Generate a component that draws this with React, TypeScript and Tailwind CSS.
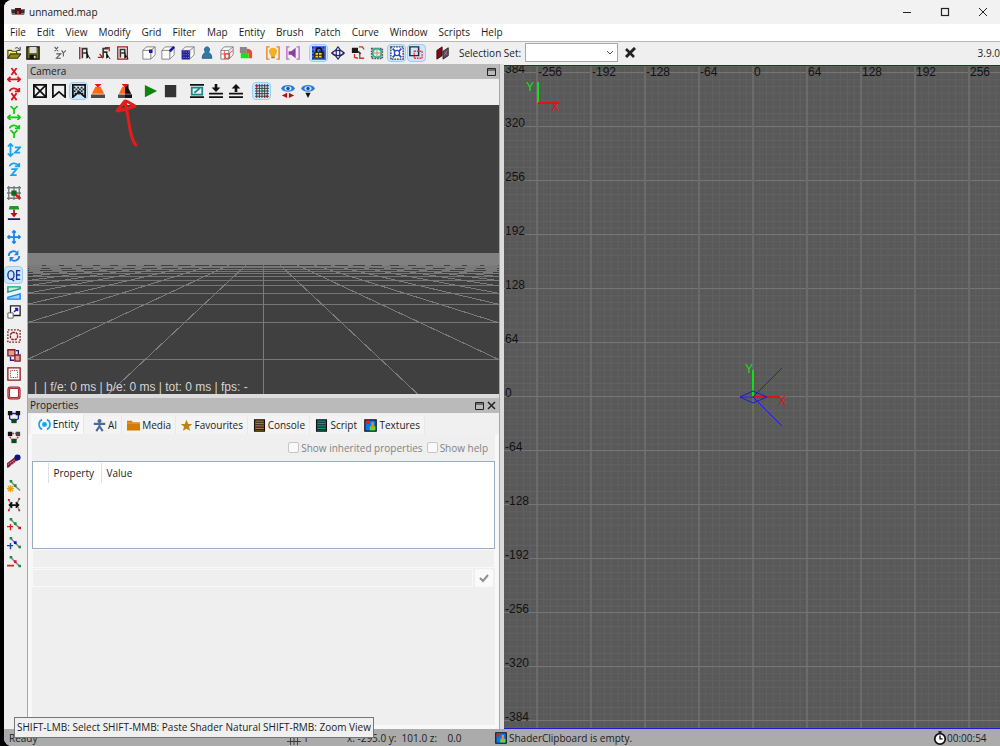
import React, { useState } from 'react';

interface IconProps {
    children: React.ReactNode;
    className?: string;
}

function Icon({ children, className = 'size-3.5' }: IconProps) {
    return (
        <svg viewBox="0 0 16 16" fill="none" className={`${className} shrink-0`} aria-hidden="true">
            {children}
        </svg>
    );
}

interface Tool {
    name: string;
    icon: React.ReactNode;
    active?: boolean;
}

function ToolButton({ name, icon, active }: Tool) {
    const [on, setOn] = useState(!!active);
    return (
        <button
            type="button"
            aria-label={name}
            onClick={() => active !== undefined && setOn(!on)}
            className={`flex h-[18px] w-[19px] shrink-0 items-center justify-center rounded-sm border ${
                on ? 'border-[#99cff5] bg-[#cce6fb]' : 'border-transparent'
            }`}
        >
            <Icon>{icon}</Icon>
        </button>
    );
}

function ToolGroup({ tools, className }: { tools: Tool[]; className: string }) {
    return (
        <div className={`flex shrink-0 items-center justify-between ${className}`}>
            {tools.map((t) => (
                <ToolButton key={t.name} {...t} />
            ))}
        </div>
    );
}

// shared shapes
const cube = <path d="M1 5h9v10H1zM1 5l4-4h10l-5 4M15 1v9l-5 5" stroke="#777" fill="#fff" />;
const flipArrow = <path d="M1 13h14M4 10l-3 3 3 3M12 10l3 3-3 3" stroke="currentColor" strokeWidth="2" />;
const spinArrow = <path d="M3 5c1-4 7-5 10-1M14 1v4H9" stroke="currentColor" strokeWidth="2" />;
const letterX = 'M5 0l6 8M11 0L5 8';
const letterY = 'M4 0l4 4 4-4M8 4v5';
const curve = <path d="M4 2l5 6 6 5" stroke="#888" strokeWidth="1.6" />;

const mainTools: { width: string; tools: Tool[] }[] = [
    {
        width: 'w-[38px]',
        tools: [
            {
                name: 'Open',
                icon: (
                    <>
                        <path d="M1 14V5h4l1 1h5v3" fill="#ffe97a" stroke="#4a4700" strokeWidth="1.3" />
                        <path d="M1 14l3-5h12l-4 5z" fill="#8b8b1a" stroke="#3c3a00" strokeWidth="1.3" />
                        <path d="M9 3c2-2 4-1 5 1M15 1v4h-4" stroke="#222" />
                    </>
                ),
            },
            {
                name: 'Save',
                icon: (
                    <>
                        <path d="M1 1h14v14H1z" fill="#6b6b1c" stroke="#111" strokeWidth="1.5" />
                        <path d="M4 1h8v7H4z" fill="#ddd" />
                        <path d="M4 10h8v5H4z" fill="#111" />
                        <path d="M9 11h2v3H9z" fill="#ddd" />
                    </>
                ),
            },
        ],
    },
    {
        width: 'w-[19px]',
        tools: [
            {
                name: 'Change views',
                icon: <path d="M3 1l4 5M7 1L3 6M5 9h5l-5 5h5M11 5l2 3 3-3M13 8v4" stroke="#555" strokeWidth="1.2" />,
            },
        ],
    },
    {
        width: 'w-[57px]',
        tools: [
            {
                name: 'Flip selection',
                icon: (
                    <>
                        <path d="M2 1v14" stroke="#a02020" strokeWidth="1.5" />
                        <path d="M5 14V3h5v5H6" stroke="#333" strokeWidth="1.800" />
                        <path d="M10 6v8l2-2 2 3" fill="#111" stroke="#111" />
                    </>
                ),
            },
            {
                name: 'Rotate selection',
                icon: (
                    <>
                        <path d="M7 13V3h6M7 7h5" stroke="#333" strokeWidth="1.800" />
                        <path d="M1 13h5M3 9l4 5M9 2h5v4" stroke="#b02020" strokeWidth="1.5" />
                        <path d="M11 7v7l2-2 2 3" fill="#111" stroke="#111" />
                    </>
                ),
            },
            {
                name: 'Scale selection',
                icon: (
                    <>
                        <path d="M2 1h11v14H2z" stroke="#a02020" strokeWidth="1.5" />
                        <path d="M5 13V4h5v4H6" stroke="#333" strokeWidth="1.800" />
                        <path d="M10 7v7l2-2 2 3" fill="#111" stroke="#111" />
                    </>
                ),
            },
        ],
    },
    {
        width: 'w-[117px]',
        tools: [
            { name: 'Select vertices', icon: <>{cube}<path d="M8 4h4v4H8z" fill="#1c1ca0" /></> },
            { name: 'Select edges', icon: <>{cube}<path d="M10 6l5-5" stroke="#1c1ca0" strokeWidth="3" /></> },
            {
                name: 'Select faces',
                icon: (
                    <>
                        {cube}
                        <path d="M1 5h9v10H1z" fill="#1c1c9c" />
                        <path d="M2 7h8M2 10h8M2 13h8" stroke="#aab" strokeDasharray="1 1" />
                    </>
                ),
            },
            {
                name: 'Clipper',
                icon: (
                    <path
                        d="M8 1c3 0 4 4 1.500 6 2 1 4 3 4 7H2.500c0-4 2-6 4-7C4 5 5 1 8 1z"
                        fill="#3379a8"
                        stroke="#1f577e"
                    />
                ),
            },
            {
                name: 'Hollow',
                icon: (
                    <>
                        {cube}
                        <path d="M1 9h9l5-4M5 5v10" stroke="#e44" />
                        <path d="M6 9h5v5H6z" stroke="#e22" />
                    </>
                ),
            },
            {
                name: 'Subtract',
                icon: (
                    <>
                        <path d="M1 1h8v7H1z" fill="#888" />
                        <path d="M9 3c4 0 6 2 6 5v6h-4V8H9z" fill="#f04a3a" />
                        <path d="M2 8h9v6H2z" fill="#1de01d" />
                    </>
                ),
            },
        ],
    },
    {
        width: 'w-[39px]',
        tools: [
            {
                name: 'Filter lights',
                icon: (
                    <>
                        <path d="M4 1H1v14h3M12 1h3v14h-3" stroke="#f08020" strokeWidth="1.6" />
                        <path d="M8 2c4 0 6 4 3.500 7L10 12H6L4.500 9C2 6 4 2 8 2z" fill="#f5b01c" />
                        <path d="M6 13h4" stroke="#b07818" strokeWidth="2" />
                    </>
                ),
            },
            {
                name: 'Filter sounds',
                icon: (
                    <>
                        <path d="M4 1H1v14h3M12 1h3v14h-3" stroke="#c468d4" strokeWidth="1.6" />
                        <path d="M3 6h3l5-4v12l-5-4H3z" fill="#8a3fa0" />
                    </>
                ),
            },
        ],
    },
    {
        width: 'w-[117px]',
        tools: [
            {
                name: 'Texture lock',
                active: true,
                icon: (
                    <>
                        <path d="M0 0h16v16H0z" fill="#4a6cf0" />
                        <path d="M0 2h16M0 6h16M0 10h16M0 14h16" stroke="#1c2a90" strokeDasharray="2 2" strokeWidth="1.500" />
                        <path d="M5 8V5c0-4 6-4 6 0v3" stroke="#111" strokeWidth="2" />
                        <path d="M2 7h12v7H2z" fill="#2d2a08" />
                        <path d="M4 9h8M4 12h8" stroke="#e7dc28" strokeDasharray="3 1" strokeWidth="2" />
                    </>
                ),
            },
            {
                name: 'Rotate free',
                icon: (
                    <>
                        <path d="M1 8c3-4 11-4 14 0-3 4-11 4-14 0z" stroke="#23236e" strokeWidth="1.600" />
                        <path d="M6 5v6M10 5v6" stroke="#23236e" strokeWidth="1.300" />
                        <path d="M8 1l3 4H5zM8 15l3-4H5z" fill="#fff" stroke="#23236e" strokeWidth="1.300" />
                    </>
                ),
            },
            {
                name: 'Swap models',
                icon: (
                    <>
                        <path d="M1 2h7v6H1z" fill="#1a1a1a" />
                        <path d="M9 1h4l2 3M4 9v4l4 1M10 9v5h5" stroke="#d03030" strokeWidth="1.500" />
                        <path d="M8 6l3 3" stroke="#333" strokeWidth="2" />
                    </>
                ),
            },
            {
                name: 'Patch thicken',
                icon: (
                    <>
                        <path d="M2 3h12v11H2z" stroke="#555" strokeDasharray="2 1" strokeWidth="2" />
                        <circle cx="8" cy="8" r="5" fill="#d9f4ef" stroke="#1cafa0" strokeWidth="2" />
                        <path d="M8 3v10M3 8h10" stroke="#e08020" />
                    </>
                ),
            },
            {
                name: 'Expand',
                active: true,
                icon: (
                    <>
                        <path d="M1 1h14v14H1z" fill="#fff" stroke="#333" strokeDasharray="2 1" strokeWidth="1.500" />
                        <circle cx="8" cy="8" r="3" stroke="#2a45dc" strokeWidth="1.500" />
                        <path d="M3 3l3 3M13 3l-3 3M3 13l3-3M13 13l-3-3" stroke="#2a45dc" strokeWidth="2" />
                    </>
                ),
            },
            {
                name: 'Region',
                active: true,
                icon: (
                    <>
                        <path d="M1 1h10v10H1z" stroke="#222c3c" strokeWidth="1.700" />
                        <path d="M6 6h9v8H6z" stroke="#e23a3a" strokeDasharray="2 1" strokeWidth="1.500" />
                    </>
                ),
            },
        ],
    },
    {
        width: 'w-[19px]',
        tools: [
            {
                name: 'Texture browser',
                icon: (
                    <>
                        <path d="M1 5l6-4v10l-6 4z" fill="#7c0c1c" stroke="#3a060c" />
                        <path d="M8 6l6-4v9l-6 4z" fill="#4a5848" stroke="#222" />
                        <path d="M10 7l3 3M13 5l-4 6" stroke="#c45ad0" />
                    </>
                ),
            },
        ],
    },
];

const crown = <path d="M1 1h14v14l-7-6-7 6z" stroke="#111" strokeWidth="2" />;
const burner = (
    <>
        <path d="M5 3h6l4 8H1z" fill="#ff6a13" />
        <path d="M4 0h8L8 4z" fill="#e81010" />
        <path d="M0 12h16v4H0z" fill="#4a4a4a" />
    </>
);
const eye = (
    <>
        <path d="M0 5c3-5 13-5 16 0-3 5-13 5-16 0z" fill="#2a78d8" />
        <ellipse cx="8" cy="5" rx="4" ry="2.500" fill="#d6e8fa" />
        <circle cx="8" cy="5" r="2" fill="#1656a8" />
    </>
);

const cameraTools: { width: string; tools: Tool[] }[] = [
    {
        width: 'w-[78px]',
        tools: [
            { name: 'Wireframe', icon: <path d="M1 1h14v14H1zM1 1l14 14M15 1L1 15" stroke="#111" strokeWidth="2" /> },
            { name: 'Flat', icon: crown },
            {
                name: 'Textured',
                active: true,
                icon: (
                    <>
                        {crown}
                        <path d="M2 4h12M2 8h12" stroke="#222" strokeDasharray="2 2" strokeWidth="2" />
                        <path d="M4 6h10M3 11h10" stroke="#222" strokeDasharray="2 2" strokeWidth="2" />
                    </>
                ),
            },
            { name: 'Lit', icon: burner },
        ],
    },
    {
        width: 'w-[19px]',
        tools: [
            {
                name: 'Lit with shadows',
                icon: (
                    <>
                        {burner}
                        <path d="M8 4l4-4v5l3 6H8z" fill="#111" />
                        <path d="M8 12h8v4H8z" fill="#111" />
                    </>
                ),
            },
        ],
    },
    {
        width: 'w-[39px]',
        tools: [
            { name: 'Start time', icon: <path d="M1 1l14 7-14 7z" fill="#0b850b" /> },
            { name: 'Stop time', icon: <path d="M1 1h13v14H1z" fill="#333" /> },
        ],
    },
    {
        width: 'w-[58px]',
        tools: [
            {
                name: 'Cubic clip',
                icon: (
                    <>
                        <path d="M0 1h16M0 15h16" stroke="#111" strokeWidth="2" />
                        <path d="M2 4h12v8H2zM5 10l6-5" stroke="#148a8c" strokeWidth="2" />
                    </>
                ),
            },
            {
                name: 'Clip in',
                icon: (
                    <>
                        <path d="M8 0v5" stroke="#111" strokeWidth="3" />
                        <path d="M3 4h10L8 9z" fill="#111" />
                        <path d="M0 11h16M0 15h16" stroke="#111" strokeWidth="2" />
                    </>
                ),
            },
            {
                name: 'Clip out',
                icon: (
                    <>
                        <path d="M8 4v5" stroke="#111" strokeWidth="3" />
                        <path d="M3 5h10L8 0z" fill="#111" />
                        <path d="M0 11h16M0 15h16" stroke="#111" strokeWidth="2" />
                    </>
                ),
            },
        ],
    },
    {
        width: 'w-[19px]',
        tools: [
            {
                name: 'Draw grid',
                active: true,
                icon: (
                    <>
                        <path
                            d="M2 0v16M5 0v16M8 0v16M11 0v16M14 0v16M0 2h16M0 5h16M0 8h16M0 11h16M0 14h16"
                            stroke="#333"
                        />
                        <path d="M1 2h2M12 14h2" stroke="#e01010" strokeWidth="2" />
                        <path d="M7 8h3" stroke="#10a020" strokeWidth="2" />
                    </>
                ),
            },
        ],
    },
    {
        width: 'w-[39px]',
        tools: [
            {
                name: 'Show all',
                icon: (
                    <>
                        {eye}
                        <path d="M7 10v6l-6-3zM9 10v6l6-3z" fill="#b01010" />
                    </>
                ),
            },
            {
                name: 'View options',
                icon: (
                    <>
                        {eye}
                        <path d="M5 10h6l-3 6z" fill="#111" />
                    </>
                ),
            },
        ],
    },
];

const red = 'text-[#dc1420]';
const green = 'text-[#12cc12]';
const sky = 'text-[#1aa2f2]';

function AxisIcon({ color, letter, spin }: { color: string; letter: string; spin?: boolean }) {
    return (
        <g className={color}>
            {spin ? spinArrow : flipArrow}
            <path d={letter} transform={spin ? 'translate(0 7)' : undefined} stroke="currentColor" strokeWidth="2" />
        </g>
    );
}

const sideTools: { height: string; tools: Tool[] }[] = [
    {
        height: 'h-[112px]',
        tools: [
            { name: 'Flip X', icon: <AxisIcon color={red} letter={letterX} /> },
            { name: 'Rotate X', icon: <AxisIcon color={red} letter={letterX} spin /> },
            { name: 'Flip Y', icon: <AxisIcon color={green} letter={letterY} /> },
            { name: 'Rotate Y', icon: <AxisIcon color={green} letter={letterY} spin /> },
            {
                name: 'Flip Z',
                icon: <path d="M4 1v14M1 4l3-3 3 3M1 12l3 3 3-3M9 5h6l-6 6h6" stroke="#1aa2f2" strokeWidth="2" />,
            },
            { name: 'Rotate Z', icon: <AxisIcon color={sky} letter="M5 1h6L5 8h6" spin /> },
        ],
    },
    {
        height: 'h-[38px]',
        tools: [
            {
                name: 'Snap to grid',
                icon: (
                    <>
                        <path d="M2 0v16M8 0v16M14 0v16M0 2h16M0 8h16M0 14h16" stroke="#777" strokeWidth="1.500" />
                        <path d="M5 5h6v6H5z" fill="#0b6a1c" />
                        <path d="M10 10l5 4" stroke="#e81010" strokeWidth="3" />
                    </>
                ),
            },
            {
                name: 'Floor',
                icon: (
                    <>
                        <path d="M3 0h10l1 4H2z" fill="#1b9a2a" />
                        <path d="M8 4v7" stroke="#b0121c" strokeWidth="2" />
                        <path d="M4 8h8l-4 5z" fill="#b0121c" />
                        <path d="M1 15h14" stroke="#1a1a5e" strokeWidth="2" />
                    </>
                ),
            },
        ],
    },
    {
        height: 'h-[93px]',
        tools: [
            {
                name: 'Translate',
                icon: (
                    <path
                        d="M8 1v14M1 8h14M6 3l2-2 2 2M6 13l2 2 2-2M3 6L1 8l2 2M13 6l2 2-2 2"
                        stroke="#1c84ee"
                        strokeWidth="2"
                    />
                ),
            },
            {
                name: 'Rotate',
                icon: (
                    <>
                        <path d="M2 8c0-5 6-7 9-4M14 8c0 5-6 7-9 4" stroke="#1c84ee" strokeWidth="2" />
                        <path d="M13 1v6H8zM3 15V9h5z" fill="#1c84ee" />
                    </>
                ),
            },
            {
                name: 'QE tool',
                active: true,
                icon: (
                    <>
                        <ellipse cx="4.500" cy="8" rx="3.500" ry="5" stroke="#1b2ca4" strokeWidth="1.500" />
                        <path d="M5 12l3 3M15 3h-4v10h4M11 8h4" stroke="#1b2ca4" strokeWidth="1.500" />
                    </>
                ),
            },
            {
                name: 'Skew',
                icon: (
                    <>
                        <path d="M1 1h14v2L1 7z" fill="#bfeee0" stroke="#14a080" strokeWidth="1.600" />
                        <path d="M15 9v6H1v-2z" fill="#9fd0fa" stroke="#1c84ee" strokeWidth="1.600" />
                    </>
                ),
            },
            {
                name: 'Scale',
                icon: (
                    <>
                        <path d="M4 1h11v11H4z" fill="#fff" stroke="#222" strokeWidth="1.500" />
                        <path d="M1 9h6v6H1z" fill="#fff" stroke="#555" />
                        <path d="M8 8l4-4M9 4h3v3" stroke="#1c1cd0" strokeWidth="1.800" />
                    </>
                ),
            },
        ],
    },
    {
        height: 'h-[75px]',
        tools: [
            {
                name: 'Select touching',
                icon: (
                    <>
                        <path d="M1 1h14v14H1z" stroke="#8b1a1a" strokeWidth="1.500" strokeDasharray="2 1.500" />
                        <path d="M6 4h4l2 2v4l-2 2H6l-2-2V6z" stroke="#8b1a1a" strokeWidth="1.500" strokeDasharray="3 1" />
                    </>
                ),
            },
            {
                name: 'Select inside',
                icon: (
                    <>
                        <path d="M1 2h8v7H1z" fill="#d7a0a0" stroke="#8b1a1a" strokeWidth="1.500" />
                        <path d="M9 8h6v7H9z" fill="#d7a0a0" stroke="#8b1a1a" strokeWidth="1.500" />
                        <path d="M10 3h3v4M4 10v4h4" stroke="#1c1c90" strokeWidth="1.500" />
                    </>
                ),
            },
            {
                name: 'Select complete tall',
                icon: (
                    <>
                        <path d="M1 1h14v14H1z" fill="#fff" stroke="#8b1a1a" strokeWidth="1.500" />
                        <path d="M4 4h8v8H4z" stroke="#8b1a1a" strokeDasharray="1 1" />
                    </>
                ),
            },
            {
                name: 'Select partial tall',
                icon: (
                    <>
                        <rect x="2" y="2" width="12" height="12" rx="2" fill="#fff" stroke="#9b1420" strokeWidth="3" />
                        <rect x="2" y="2" width="12" height="12" rx="2" stroke="#d88" strokeWidth="1" />
                    </>
                ),
            },
        ],
    },
    {
        height: 'h-[38px]',
        tools: [
            {
                name: 'Connect entities',
                icon: (
                    <>
                        <path d="M3 4h10v6l-5 3-5-3z" stroke="#1c1cd0" strokeWidth="1.500" />
                        <path d="M1 1h5v5H1zM10 1h5v5h-5z" fill="#151515" />
                        <path d="M5 10h6v5H5z" fill="#0c4a1c" />
                    </>
                ),
            },
            {
                name: 'Bind entities',
                icon: (
                    <>
                        <path d="M1 2h5v5H1z" fill="#151515" />
                        <path d="M10 2h5v5h-5z" fill="#444" />
                        <path d="M5 10h6v5H5z" fill="#0c4a1c" />
                        <path d="M6 4h4M3 8l3 3M13 8l-3 3" stroke="#e02020" strokeWidth="1.500" strokeDasharray="2 1" />
                    </>
                ),
            },
        ],
    },
    {
        height: 'h-[19px]',
        tools: [
            {
                name: 'Curve editor',
                icon: (
                    <>
                        <path d="M1 13l10-8" stroke="#8b1a3a" strokeWidth="5" strokeLinecap="round" />
                        <path d="M1 12l9-6M4 13l8-6" stroke="#e0a8b8" strokeDasharray="2 1" />
                        <circle cx="12" cy="4" r="3.500" fill="#101080" />
                    </>
                ),
            },
        ],
    },
    {
        height: 'h-[94px]',
        tools: [
            {
                name: 'Insert curve points',
                icon: (
                    <>
                        {curve}
                        <path d="M3 1h3v3H3zM8 6h3v3H8z" fill="#129040" />
                        <path d="M4 7v8M0 11h8M1 8l6 6M7 8l-6 6" stroke="#eda012" strokeWidth="1.500" />
                    </>
                ),
            },
            {
                name: 'Convert curve type',
                icon: (
                    <>
                        <path d="M2 2l3 6-3 6M14 1l-3 6 3 7" stroke="#888" strokeWidth="1.500" />
                        <path d="M3 8h10M6 5L3 8l3 3M10 5l3 3-3 3" stroke="#111" strokeWidth="2" />
                        <path d="M1 1h2v2H1zM13 0h2v2h-2zM1 13h2v2H1zM13 13h2v2h-2z" fill="#e01010" />
                    </>
                ),
            },
            {
                name: 'Append curve point',
                icon: (
                    <>
                        {curve}
                        <path d="M3 1h3v3H3zM8 6h3v3H8z" fill="#129040" />
                        <path d="M13 11h3v3h-3z" fill="#d01010" />
                        <path d="M4 8v7M0 11h7" stroke="#d02a12" strokeWidth="1.600" />
                    </>
                ),
            },
            {
                name: 'Insert point',
                icon: (
                    <>
                        {curve}
                        <path d="M3 1h3v3H3zM13 11h3v3h-3z" fill="#129040" />
                        <path d="M8 6h3v3H8z" fill="#1010d0" />
                        <path d="M4 8v7M0 11h7" stroke="#1a4aa0" strokeWidth="1.600" />
                    </>
                ),
            },
            {
                name: 'Remove curve points',
                icon: (
                    <>
                        {curve}
                        <path d="M3 1h3v3H3zM13 11h3v3h-3z" fill="#129040" />
                        <path d="M8 6h3v3H8z" fill="#e01040" />
                        <path d="M0 12h8" stroke="#d02a12" strokeWidth="2" />
                    </>
                ),
            },
        ],
    },
];

const menus = [
    'File', 'Edit', 'View', 'Modify', 'Grid', 'Filter', 'Map', 'Entity',
    'Brush', 'Patch', 'Curve', 'Window', 'Scripts', 'Help',
];

const textureIcon = (
    <>
        <path d="M1 1h14v14H1z" fill="#0a78e8" stroke="#111" strokeWidth="1.500" />
        <path d="M2 2h5v4H2z" fill="#e81c1c" />
        <path d="M7 9h7v5H7z" fill="#5be01c" />
        <path d="M9 4h3v7H9z" fill="#e8901c" />
    </>
);

function sheet(color: string) {
    return (
        <>
            <path d="M2 1h12v14H2z" fill={color} stroke="#111" strokeWidth="1.600" />
            <path d="M3 4h10M3 7h10M3 10h10M3 13h10" stroke="#222" strokeWidth="1.300" />
        </>
    );
}

const tabs = [
    {
        name: 'Entity',
        width: 'w-[53px]',
        icon: (
            <>
                <path d="M5 2c-5 2-5 10 0 12M11 2c5 2 5 10 0 12" stroke="#1aa2f2" strokeWidth="2" />
                <circle cx="8" cy="8" r="3" fill="#1aa2f2" />
            </>
        ),
    },
    {
        name: 'AI',
        width: 'w-[38px]',
        icon: (
            <>
                <circle cx="8" cy="2.500" r="2.500" fill="#4a6a9a" />
                <path d="M1 6h14M8 5v5M8 9l-4 6M8 9l4 6" stroke="#4a6a9a" strokeWidth="2.500" />
            </>
        ),
    },
    {
        name: 'Media',
        width: 'w-[54px]',
        icon: (
            <>
                <path d="M0 2h6l1 2h9v10H0z" fill="#d27d00" />
                <path d="M0 5h16" stroke="#f0b050" />
            </>
        ),
    },
    {
        name: 'Favourites',
        width: 'w-[72px]',
        icon: <path d="M8 1l2.200 5H15l-4 3.500 1.500 5L8 12l-4.500 2.500L5 9.500 1 6h4.800z" fill="#c08312" />,
    },
    { name: 'Console', width: 'w-[62px]', icon: sheet('#a8783e') },
    { name: 'Script', width: 'w-[52px]', icon: sheet('#169088') },
    { name: 'Textures', width: 'w-[63px]', icon: textureIcon },
];

function TitleBar() {
    return (
        <header className="flex h-6 shrink-0 items-center bg-[#f2f2f2] pl-[7px] text-[#1a1a1a]">
            <svg viewBox="0 0 14 8" className="h-2 w-3.5" aria-hidden="true">
                <path d="M0 1h14v3l-1 3H1L0 4z" fill="#777" />
                <path d="M1 2h4v3H1zM9 2h4v3H9z" fill="#3a2a2a" />
                <path d="M4 0h6v6H4z" fill="#4a1414" />
                <path d="M6 3h2v3H6z" fill="#c03030" />
            </svg>
            <h1 className="flex-1 pl-1">unnamed.map</h1>
            <div className="flex items-center gap-7 pr-3">
                <button type="button" aria-label="Minimize">
                    <svg viewBox="0 0 10 10" className="size-2.5"><path d="M1 5.500h8" stroke="#222" /></svg>
                </button>
                <button type="button" aria-label="Maximize">
                    <svg viewBox="0 0 10 10" className="size-2.5" fill="none">
                        <rect x="1.500" y="1.500" width="7" height="7" stroke="#222" strokeWidth="1.200" />
                    </svg>
                </button>
                <button type="button" aria-label="Close">
                    <svg viewBox="0 0 10 10" className="size-2.5"><path d="M1 1l8 8M9 1L1 9" stroke="#222" /></svg>
                </button>
            </div>
        </header>
    );
}

function MainToolbar() {
    return (
        <div className="flex h-[22px] shrink-0 items-center gap-[7px] bg-[#efefef] pb-px">
            {mainTools.map((g) => (
                <ToolGroup key={g.tools[0].name} tools={g.tools} className={g.width} />
            ))}
            <div className="flex items-center gap-1.5">
                <label htmlFor="selection-set" className="w-[60px] whitespace-nowrap">Selection Set:</label>
                <div className="relative">
                    <select
                        id="selection-set"
                        className="block h-[19px] w-[93px] appearance-none border border-[#a8a8a8] bg-white"
                    >
                        <option></option>
                    </select>
                    <svg viewBox="0 0 8 8" className="pointer-events-none absolute right-1 top-1.5 size-2" fill="none">
                        <path d="M1 2l3 3 3-3" stroke="#555" />
                    </svg>
                </div>
                <button type="button" aria-label="Clear selection sets">
                    <svg viewBox="0 0 12 12" className="size-3" fill="none">
                        <path d="M2 2l8 8" stroke="#222" strokeWidth="2.500" />
                        <path d="M11 1L2 10" stroke="#222" strokeWidth="3" />
                    </svg>
                </button>
            </div>
            <span className="ml-auto">3.9.0</span>
        </div>
    );
}

function PanelHeader({ title, closable }: { title: string; closable?: boolean }) {
    return (
        <div className="flex h-[15px] shrink-0 items-center gap-[3px] bg-[#bababa] pr-[3px] pb-px pl-0.5">
            <h2 className="flex-1">{title}</h2>
            <button type="button" aria-label="Float panel">
                <svg viewBox="0 0 9 9" className="size-[9px]" fill="none">
                    <path d="M.5 1.500h8v7h-8zM.5 3h8" stroke="#222" />
                </svg>
            </button>
            {closable && (
                <button type="button" aria-label="Close panel">
                    <svg viewBox="0 0 9 9" className="size-[9px]"><path d="M1 1l7 7M8 1L1 8" stroke="#222" strokeWidth="1.500" /></svg>
                </button>
            )}
        </div>
    );
}

// floor lines converge on the vanishing point at 235,144
const VX = 235;
const VY = 144;

function CameraView() {
    const rows = Array.from({ length: 12 }, (_, i) => VY + 221 / (i + 2));
    const spokes = Array.from({ length: 121 }, (_, i) => i - 60);
    return (
        <div className="relative min-h-0 flex-1 bg-[#404040]">
            <svg className="block h-full w-full" shapeRendering="crispEdges" aria-hidden="true">
                <rect x="0" y="148" width="100%" height="12" fill="#808080" />
                {rows.map((y) => (
                    <line key={y} x1="0" x2="100%" y1={y} y2={y} stroke="#767676" />
                ))}
                {spokes.map((m) => (
                    <line key={m} x1={VX + m * 17} y1={VY + 16} x2={VX + m * 160} y2={VY + 150} stroke="#7c7c7c" />
                ))}
            </svg>
            <p className="absolute bottom-0 left-1.5 whitespace-pre font-['Liberation_Sans',sans-serif] text-[12px] leading-[14px] text-[#d4d4d4]">
                |  | f/e: 0 ms | b/e: 0 ms | tot: 0 ms | fps: -
            </p>
        </div>
    );
}

function CameraPanel() {
    return (
        <section className="relative flex h-[330px] shrink-0 flex-col">
            <PanelHeader title="Camera" />
            <div className="flex h-[26px] shrink-0 items-center gap-[7px] bg-[#efefef] pb-0.5 pl-0.5">
                {cameraTools.map((g) => (
                    <ToolGroup key={g.tools[0].name} tools={g.tools} className={g.width} />
                ))}
            </div>
            <CameraView />
            <svg viewBox="0 0 26 52" className="pointer-events-none absolute left-[86px] top-8 h-[52px] w-[26px]" fill="none">
                <path
                    d="M22 49C15 42 15 20 11 6M11 5C8 9 5 12 3 15c6-1 13-3 18-5C17 8 14 5 11 5z"
                    stroke="#e51c1c"
                    strokeWidth="3"
                    strokeLinecap="round"
                    strokeLinejoin="round"
                />
            </svg>
        </section>
    );
}

function PropertiesPanel() {
    const [tab, setTab] = useState('Entity');
    return (
        <section className="flex min-h-0 flex-1 flex-col bg-[#f8f8f8]">
            <PanelHeader title="Properties" closable />
            <div role="tablist" className="flex h-[21px] shrink-0 items-end bg-[#f0f0f0] pl-[3px]">
                {tabs.map((t) => (
                    <button
                        key={t.name}
                        type="button"
                        role="tab"
                        aria-selected={t.name === tab}
                        onClick={() => setTab(t.name)}
                        className={`flex shrink-0 items-center justify-end gap-0.5 border-r border-[#e8e8e8] pr-1 ${t.width} ${
                            t.name === tab ? 'h-5 bg-[#f9f9f9]' : 'h-[18px] bg-[#f3f3f3]'
                        }`}
                    >
                        <Icon className="size-[13px]">{t.icon}</Icon>
                        {t.name}
                    </button>
                ))}
            </div>
            <div className="mx-1 mb-1 flex flex-1 flex-col bg-[#efefef]">
                <div className="flex h-[27px] shrink-0 items-center justify-end gap-1 pr-[7px] text-[#838383]">
                    <label className="flex items-center gap-0.5">
                        <input type="checkbox" disabled className="size-[11px] appearance-none rounded-xs border border-[#c6c6c6] bg-[#f9f9f9]" />
                        Show inherited properties
                    </label>
                    <label className="flex items-center gap-0.5">
                        <input type="checkbox" disabled className="size-[11px] appearance-none rounded-xs border border-[#c6c6c6] bg-[#f9f9f9]" />
                        Show help
                    </label>
                </div>
                <div className="h-[88px] shrink-0 border border-[#98aec6] bg-white pt-px">
                    <table className="w-full table-fixed border-collapse text-left">
                        <thead>
                            <tr className="h-5">
                                <th className="w-[15px] border-r border-[#e0e0e0]" />
                                <th className="w-[53px] border-r border-[#e0e0e0] pl-[5px] font-normal">Property</th>
                                <th className="pl-[5px] font-normal">Value</th>
                            </tr>
                        </thead>
                    </table>
                </div>
                <input type="text" aria-label="Key" disabled className="h-[19px] border border-[#f9f9f9] bg-[#efefef]" />
                <div className="mt-px flex gap-0.5 pr-0.5">
                    <input type="text" aria-label="Value" disabled className="h-[18px] min-w-0 flex-1 border border-[#f9f9f9] bg-[#efefef]" />
                    <button type="button" aria-label="Apply" disabled className="flex h-[18px] w-[18px] items-center justify-center rounded-xs bg-[#fafafa]">
                        <svg viewBox="0 0 10 10" className="size-2.5" fill="none">
                            <path d="M1 5l3 3 5-6" stroke="#909090" strokeWidth="2" />
                        </svg>
                    </button>
                </div>
            </div>
        </section>
    );
}

// origin of the map inside the pane, and pixels per 64 units
const OX = 249;
const OY = 331;
const STEP = 54;

function OrthoView() {
    const minor = Array.from({ length: 200 }, (_, i) => (i - 60) * (STEP / 8));
    const major = Array.from({ length: 31 }, (_, i) => i - 12);
    return (
        <section className="min-w-0 flex-1 border-y border-[#1a1ad0] bg-[#595959]" aria-label="XY Top">
            <svg className="block h-full w-full font-['Liberation_Sans',sans-serif] text-[12px]" fill="none">
                {minor.map((d) => (
                    <React.Fragment key={d}>
                        <line x1={OX + d} x2={OX + d} y1="0" y2="100%" stroke="#616161" />
                        <line y1={OY + d} y2={OY + d} x1="0" x2="100%" stroke="#616161" />
                    </React.Fragment>
                ))}
                {major.map((m) => (
                    <React.Fragment key={m}>
                        <line x1={OX + m * STEP} x2={OX + m * STEP} y1="0" y2="100%" stroke="#6b6b6b" strokeWidth="2" />
                        <line y1={OY + m * STEP - 0.5} y2={OY + m * STEP - 0.5} x1="0" x2="100%" stroke="#757575" />
                    </React.Fragment>
                ))}
                {[-4, -3, -2, -1, 0, 1, 2, 3, 4].map((m) => (
                    <text key={m} x={OX + m * STEP + 1} y="10" fill="#111">{m * 64}</text>
                ))}
                {[6, 5, 4, 3, 2, 1, 0, -1, -2, -3, -4, -5, -6].map((m) => (
                    <text key={m} x="1" y={OY - m * STEP} fill="#111">{m * 64}</text>
                ))}
                <path d="M34 16v21" stroke="#12e012" strokeWidth="2" />
                <path d="M34 37h21" stroke="#e01212" strokeWidth="2" />
                <text x="22" y="25" fill="#12e012">Y</text>
                <text x="47" y="45" fill="#e01212">X</text>
                <path d="M249 304v27" stroke="#12e012" strokeWidth="2" />
                <path d="M249 331h27" stroke="#e01212" strokeWidth="2" />
                <text x="241" y="307" fill="#12e012">Y</text>
                <text x="274" y="339" fill="#e01212">X</text>
                <path d="M236 331l13-6 14 6-14 6zM236 331h14M278 302l-29 29 29 29" stroke="#1c1cd0" />
            </svg>
        </section>
    );
}

function StatusBar() {
    return (
        <footer className="relative flex h-[17px] shrink-0 items-center bg-[#ababab] pl-[5px]">
            <span className="w-[278px]">Ready</span>
            <Icon className="size-3.5">
                <path d="M4 0v16M12 0v16M8 0v16M0 4h16M0 12h16" stroke="#333" />
            </Icon>
            <span className="w-[46px] pl-0.5">1</span>
            <span className="w-[148px] whitespace-pre">x: -295.0 y:  101.0 z:    0.0</span>
            <Icon className="size-3">{textureIcon}</Icon>
            <span className="flex-1 pl-0.5">ShaderClipboard is empty.</span>
            <Icon className="size-3.5">
                <circle cx="8" cy="9" r="6" fill="#fff" stroke="#111" strokeWidth="2" />
                <path d="M6 1h4M8 1v2M8 5v4h3" stroke="#111" strokeWidth="1.500" />
            </Icon>
            <time className="w-[53px]">00:00:54</time>
            <div role="tooltip" className="absolute bottom-2 left-2.5 border border-[#767676] bg-[#f0f0f0] px-0.5 leading-[19px] whitespace-nowrap">
                SHIFT-LMB: Select SHIFT-MMB: Paste Shader Natural SHIFT-RMB: Zoom View
            </div>
        </footer>
    );
}

export default function App() {
    return (
        <div className="h-screen overflow-hidden bg-black pl-1 font-['Open_Sans',sans-serif] text-[10px] leading-[14px] text-[#1c1c1c]">
            <div className="flex h-full flex-col overflow-hidden rounded-l-lg bg-[#f0f0f0]">
                <TitleBar />
                <nav className="flex h-[18px] shrink-0 items-center gap-[11px] border-b border-[#b8b8b8] bg-white pb-px pl-1.5">
                    {menus.map((m) => (
                        <button key={m} type="button">{m}</button>
                    ))}
                </nav>
                <MainToolbar />
                <div className="flex min-h-0 flex-1">
                    <aside className="flex w-6 shrink-0 flex-col gap-1.5 border-r border-[#a6a6a6] bg-[#f0f0f0] pt-0.5">
                        {sideTools.map((g) => (
                            <ToolGroup key={g.tools[0].name} tools={g.tools} className={`flex-col items-start! ${g.height}`} />
                        ))}
                    </aside>
                    <div className="flex w-[472px] shrink-0 flex-col gap-1 border-r border-[#a6a6a6] bg-[#dcdcdc]">
                        <CameraPanel />
                        <PropertiesPanel />
                    </div>
                    <div className="w-1 shrink-0 bg-[#dcdcdc]" />
                    <div className="flex min-w-0 flex-1 pt-px">
                        <OrthoView />
                    </div>
                </div>
                <StatusBar />
            </div>
        </div>
    );
}
